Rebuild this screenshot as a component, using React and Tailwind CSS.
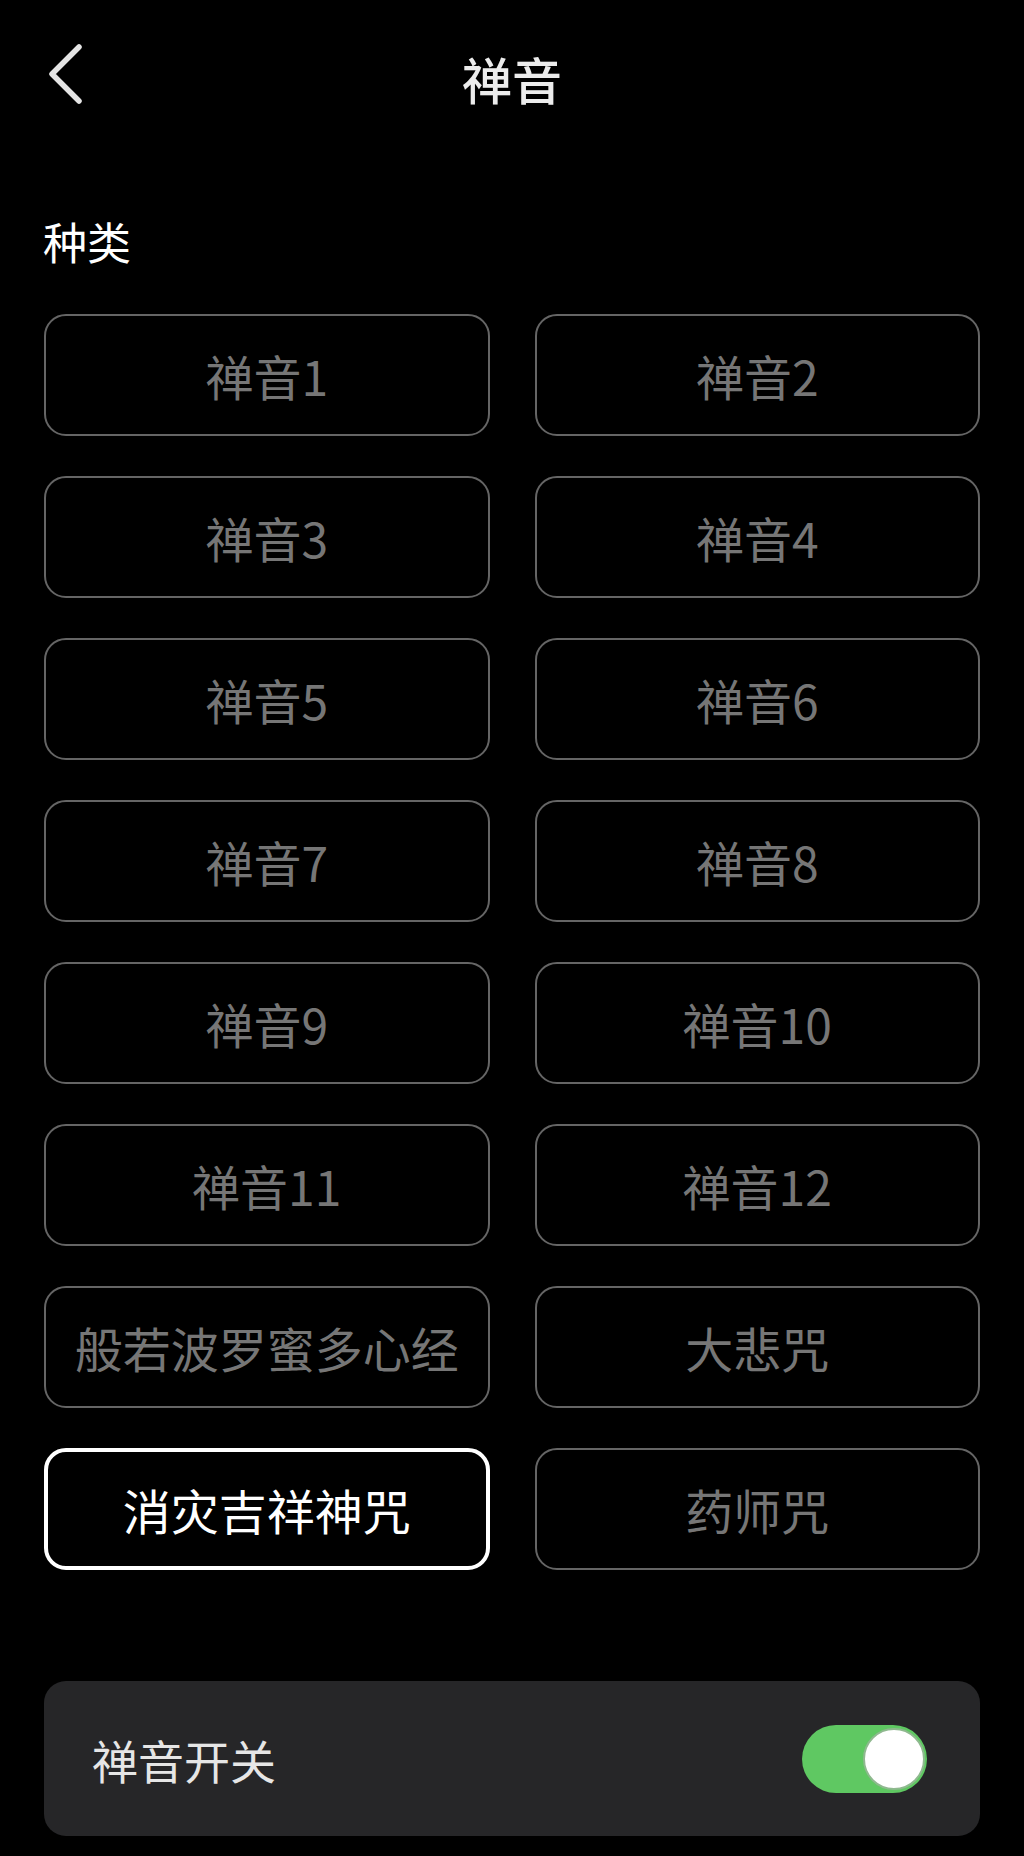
import React from "react";

const items = [
  "禅音1", "禅音2", "禅音3", "禅音4", "禅音5", "禅音6", "禅音7", "禅音8",
  "禅音9", "禅音10", "禅音11", "禅音12", "般若波罗蜜多心经", "大悲咒", "消灾吉祥神咒", "药师咒",
];

export default function App() {
  return (
    <div
      className="w-[1024px] h-[1856px] bg-black overflow-hidden"
      style={{ fontFamily: '"Noto Sans CJK SC", "Noto Sans", sans-serif' }}
    >
      <div className="relative h-[156px] flex items-center justify-center">
        <svg
          className="absolute left-[40px] top-[38px]"
          width="50"
          height="72"
          viewBox="0 0 50 72"
          fill="none"
        >
          <path d="M39 9 L12 36 L39 63" stroke="#e4e4e4" strokeWidth="5.5" strokeLinecap="round" strokeLinejoin="round" />
        </svg>
        <div className="text-[50px] leading-none font-medium text-[#ececec]">禅音</div>
      </div>

      <div className="mt-[63px] px-[43px] text-[44px] leading-[44px] text-white">种类</div>

      <div className="mt-[51px] px-[44px] grid grid-cols-2 gap-x-[45px] gap-y-[40px]">
        {items.map((t) => {
          const sel = t === "消灾吉祥神咒";
          return (
            <div
              key={t}
              className={
                sel
                  ? "h-[122px] rounded-[22px] border-[4px] border-white flex items-center justify-center text-[48px] leading-none text-white"
                  : "h-[122px] rounded-[22px] border-2 border-[#656565] flex items-center justify-center text-[48px] leading-none text-[#767676]"
              }
            >
              {t}
            </div>
          );
        })}
      </div>

      <div className="mt-[111px] mx-[44px] h-[155px] rounded-[22px] bg-[#262628] flex items-center justify-between pl-[48px] pr-[53px]">
        <div className="text-[46px] leading-none text-[#e6e6e6]">禅音开关</div>
        <div className="w-[125px] h-[68px] rounded-full bg-[#5fc862] flex items-center justify-end pr-[2px]">
          <div className="w-[62px] h-[62px] rounded-full bg-white border-2 border-[#8fb98f]" />
        </div>
      </div>
    </div>
  );
}
